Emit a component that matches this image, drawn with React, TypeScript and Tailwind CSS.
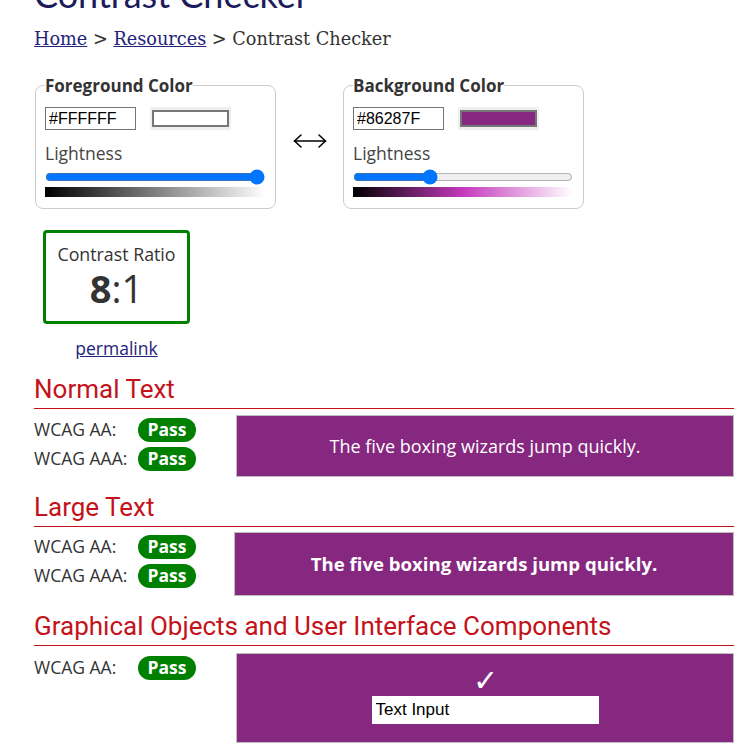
const body = "font-['Open_Sans',sans-serif]";

const ColorField = ({
  legend,
  hex,
  swatch,
  value,
  gradient,
}: {
  legend: string;
  hex: string;
  swatch: string;
  value: number;
  gradient: string;
}) => (
  <fieldset className="w-[241px] rounded-lg border border-[#cccccc] px-[9px] pb-[11px]">
    <legend className="px-0 text-[17px] font-bold leading-[23px] text-[#333333]">{legend}</legend>
    <div className="mt-[10px] flex items-center gap-[14px]">
      <input
        type="text"
        defaultValue={hex}
        className="h-[23px] w-[91px] border border-[#767676] bg-white px-[3px] font-['Liberation_Sans',sans-serif] text-[16px] text-black outline-none"
      />
      <div className="flex h-[23px] w-[81px] items-center justify-center bg-[#efefef]">
        <div className="h-[17px] w-[77px] border-2 border-[#767676]" style={{ backgroundColor: swatch }} />
      </div>
    </div>
    <div className="mt-[11px] text-[17.5px] leading-[24px] text-[#444444]">Lightness</div>
    <input type="range" min={0} max={100} defaultValue={value} className="mt-[4px] block h-[16px] w-[220px]" />
    <div className={`mt-[2px] h-[10px] w-[220px] ${gradient}`} />
  </fieldset>
);

const Pass = () => (
  <span className="inline-flex h-[24px] w-[58px] items-center justify-center rounded-full bg-[#008000] text-[17.5px] font-bold text-white">
    Pass
  </span>
);

const Row = ({ label }: { label: string }) => (
  <div className="flex h-[29px] items-center">
    <span className="w-[104px] text-[17.5px] text-[#333333]">{label}</span>
    <Pass />
  </div>
);

const Heading = ({ children }: { children: string }) => (
  <h2 className="border-b border-solid border-b-[#c4121a] pb-[4px] font-['Roboto',sans-serif] text-[26px] leading-[30px] text-[#c4121a]">
    {children}
  </h2>
);

export default function App() {
  return (
    <div className={`${body} min-h-[754px] w-[744px] overflow-hidden bg-white pl-[34px] pr-[10px]`}>
      <h1 className="-mt-[27px] font-['Lato',sans-serif] text-[36px] leading-[42px] text-[#1c1c5c]">Contrast Checker</h1>
      <nav className="mt-[12px] font-['DejaVu_Serif',serif] text-[17.7px] leading-[24px] text-[#333333]">
        <a href="#" className="text-[#23237a] underline">Home</a> &gt;{" "}
        <a href="#" className="text-[#23237a] underline">Resources</a> &gt; Contrast Checker
      </nav>

      <div className="mt-[23px] ml-[1px] flex items-center">
        <ColorField
          legend="Foreground Color"
          hex="#FFFFFF"
          swatch="#ffffff"
          value={100}
          gradient="bg-[linear-gradient(to_right,#000000,#ffffff)]"
        />
        <div className="flex w-[67px] justify-center pb-[2px]">
          <svg width="34" height="16" viewBox="0 0 34 16" fill="none" stroke="black" strokeWidth="1.6" strokeLinecap="round" strokeLinejoin="round">
            <path d="M1.5 8H32.5" />
            <path d="M8 2L1.5 8L8 14" />
            <path d="M26 2L32.5 8L26 14" />
          </svg>
        </div>
        <ColorField
          legend="Background Color"
          hex="#86287F"
          swatch="#86287f"
          value={34}
          gradient="bg-[linear-gradient(to_right,#000000,#c43abd,#ffffff)]"
        />
      </div>

      <div className="mt-[21px] ml-[9px] flex w-[147px] flex-col items-center">
        <div className="flex h-[94px] w-[147px] flex-col items-center justify-center rounded-[4px] border-[3px] border-[#008000] pb-[2px]">
          <div className="text-[17.8px] leading-[24px] text-[#333333]">Contrast Ratio</div>
          <div className="text-[38px] leading-[44px] text-[#333333]">
            <span className="font-bold">8</span>:1
          </div>
        </div>
        <a href="#" className="mt-[12px] text-[17.5px] leading-[24px] text-[#23237a] underline">permalink</a>
      </div>

      <section className="mt-[14px]">
        <Heading>Normal Text</Heading>
        <div className="mt-[6px] flex">
          <div className="w-[202px]">
            <Row label="WCAG AA:" />
            <Row label="WCAG AAA:" />
          </div>
          <div className="flex h-[62px] flex-1 items-center justify-center border border-[#bfbfbf] bg-[#86287f] text-[18px] text-white">
            The five boxing wizards jump quickly.
          </div>
        </div>
      </section>

      <section className="mt-[15px]">
        <Heading>Large Text</Heading>
        <div className="mt-[5px] flex">
          <div className="w-[200px]">
            <Row label="WCAG AA:" />
            <Row label="WCAG AAA:" />
          </div>
          <div className="flex h-[64px] flex-1 items-center justify-center border border-[#bfbfbf] bg-[#86287f] text-[18.6px] font-bold text-white">
            The five boxing wizards jump quickly.
          </div>
        </div>
      </section>

      <section className="mt-[15px]">
        <Heading>Graphical Objects and User Interface Components</Heading>
        <div className="mt-[7px] flex">
          <div className="w-[202px]">
            <Row label="WCAG AA:" />
          </div>
          <div className="flex h-[90px] flex-1 flex-col items-center border border-[#bfbfbf] bg-[#86287f] pt-[13px]">
            <span className="font-['Liberation_Serif',serif] text-[30px] leading-[28px] text-white">✓</span>
            <input
              type="text"
              defaultValue="Text Input"
              className="mt-[1px] h-[28px] w-[227px] bg-white px-[4px] font-['Liberation_Sans',sans-serif] text-[17px] text-black outline-none"
            />
          </div>
        </div>
      </section>
    </div>
  );
}
